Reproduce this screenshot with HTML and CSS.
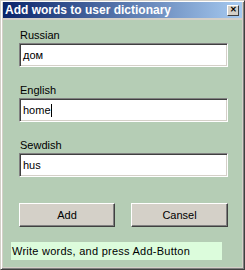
FILE: index.html
```html
<!DOCTYPE html>
<html lang="en">
<head>
    <meta charset="UTF-8">
    <meta name="viewport" content="width=device-width, initial-scale=1.0">
    <title>Add words to user dictionary</title>
    <link rel="stylesheet" href="styles.css">
</head>
<body>
    <div class="window">
        <div class="titlebar">
            <span class="title">Add words to user dictionary</span>
            <button class="close" type="button">&#x2715;</button>
        </div>
        <div class="client">
            <div class="fields">
                <div class="field">
                    <label>Russian</label>
                    <div class="textbox">дом</div>
                </div>
                <div class="field">
                    <label>English</label>
                    <div class="textbox">home<span class="caret"></span></div>
                </div>
                <div class="field">
                    <label>Sewdish</label>
                    <div class="textbox">hus</div>
                </div>
            </div>
            <div class="buttons">
                <button type="button">Add</button>
                <button type="button">Cansel</button>
            </div>
            <div class="status">Write words, and press Add-Button</div>
        </div>
    </div>
</body>
</html>
```

FILE: styles.css
```css
body {
    margin: 0;
    font-family: "Liberation Sans", Arial, sans-serif;
    font-size: 11px;
    color: #000;
}
.window {
    width: 245px;
    height: 270px;
    box-sizing: border-box;
    background-color: #d4d0c8;
    border: 1px solid;
    border-color: #d4d0c8 #404040 #404040 #d4d0c8;
    box-shadow: inset 1px 1px #fff, inset -1px -1px #808080;
    padding: 1px 2px 2px 2px;
    display: flex;
    flex-direction: column;
}
.titlebar {
    height: 16px;
    display: flex;
    align-items: center;
    justify-content: space-between;
    background: linear-gradient(to right, #0a246a, #a6caf0);
    padding-left: 2px;
}
.title {
    color: #fff;
    font-weight: bold;
    font-size: 12px;
    white-space: nowrap;
}
.close {
    width: 12px;
    height: 11px;
    padding: 0;
    margin-right: 3px;
    background-color: #d4d0c8;
    border: 1px solid;
    border-color: #fff #404040 #404040 #fff;
    font-size: 8px;
    line-height: 8px;
    font-weight: bold;
    color: #000;
}
.client {
    flex: 1;
    margin-top: 2px;
    background-color: #b5cdb5;
    padding: 8px 14px 0 16px;
}
.fields {
    display: flex;
    flex-direction: column;
    gap: 16px;
}
.field label {
    display: block;
    height: 14px;
    line-height: 14px;
    padding-left: 1px;
    margin-bottom: 1px;
}
.textbox {
    height: 24px;
    box-sizing: border-box;
    background-color: #fff;
    border: 1px solid;
    border-color: #808080 #fff #fff #808080;
    box-shadow: inset 1px 1px #404040, inset -1px -1px #d4d0c8;
    padding: 4px 3px;
    line-height: 14px;
    font-size: 11px;
}
.caret {
    display: inline-block;
    width: 1px;
    height: 13px;
    background-color: #000;
    vertical-align: -3px;
}
.buttons {
    display: grid;
    grid-template-columns: 96px 97px;
    gap: 16px;
    margin-top: 26px;
}
.buttons button {
    height: 24px;
    background-color: #d4d0c8;
    border: 1px solid;
    border-color: #fff #404040 #404040 #fff;
    box-shadow: inset -1px -1px #808080;
    font-family: "Liberation Sans", Arial, sans-serif;
    font-size: 11px;
    color: #000;
    padding: 0;
}
.status {
    margin: 15px 6px 0 -8px;
    height: 18px;
    line-height: 18px;
    background-color: #dcfcdc;
    padding-left: 1px;
    letter-spacing: 0.25px;
    white-space: nowrap;
}
```
